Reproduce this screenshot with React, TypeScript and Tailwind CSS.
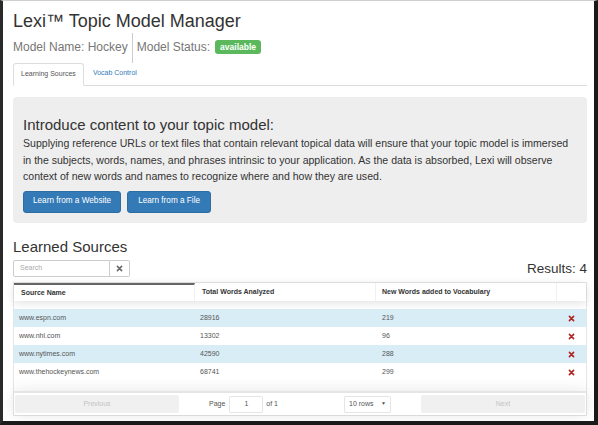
import React from "react";

const rows = [
  { name: "www.espn.com", total: "28916", added: "219" },
  { name: "www.nhl.com", total: "13302", added: "96" },
  { name: "www.nytimes.com", total: "42590", added: "288" },
  { name: "www.thehockeynews.com", total: "68741", added: "299" },
];

function RemoveIcon({ className }: { className?: string }) {
  return (
    <svg viewBox="0 0 10 10" className={className} aria-hidden>
      <path d="M2 2 L8 8 M8 2 L2 8" stroke="currentColor" strokeWidth="2.2" strokeLinecap="round" />
    </svg>
  );
}

export default function App() {
  return (
    <div className="h-[425px] w-[598px] overflow-hidden border-t border-l-[3px] border-r-[4px] border-b-[4px] border-t-[#cfcfcf] border-l-[#2a2a2a] border-r-[#1a1a1a] border-b-[#1a1a1a] bg-white pl-[10px] pr-[7px] font-['Liberation_Sans',Arial,sans-serif] text-[#333]">
      <h1 className="pt-[10px] text-[18px] leading-[20px]">Lexi™ Topic Model Manager</h1>

      <div className="mt-[2px] flex h-[30px] items-start text-[12px] text-[#777]">
        <span className="pt-[7px] leading-[14px]">Model Name: Hockey</span>
        <span className="ml-[4px] h-[30px] border-l border-[#ccc]" />
        <span className="flex items-center pt-[7px] pl-[4px] leading-[14px]">
          Model Status:
          <span className="ml-[5px] rounded-[3px] bg-[#5cb85c] px-[5px] text-[8.5px] font-bold leading-[14px] text-white">available</span>
        </span>
      </div>

      <div className="flex h-[23px] items-end border-b border-[#ddd] text-[7px]">
        <div className="-mb-px flex h-[23px] items-center rounded-t-[3px] border border-[#ddd] border-b-white bg-white px-[7px] text-[#555]">
          Learning Sources
        </div>
        <div className="flex h-[23px] items-center px-[9px] text-[#337ab7]">Vocab Control</div>
      </div>

      <div className="mt-[11px] h-[126px] rounded-[4px] bg-[#eee] px-[10px] pt-[19px]">
        <h3 className="text-[15px] leading-[18px]">Introduce content to your topic model:</h3>
        <p className="mt-[1px] pr-[8px] text-[10.55px] leading-[16.5px]">
          Supplying reference URLs or text files that contain relevant topical data will ensure that your topic model is immersed in the subjects, words, names, and phrases intrinsic to your application. As the data is absorbed, Lexi will observe context of new words and names to recognize where and how they are used.
        </p>
        <div className="mt-[6px] flex gap-[6px]">
          <button className="h-[22px] rounded-[3px] border border-[#2e6da4] bg-[#337ab7] px-[9px] text-[8.2px] text-white">Learn from a Website</button>
          <button className="h-[22px] rounded-[3px] border border-[#2e6da4] bg-[#337ab7] px-[10px] text-[8.2px] text-white">Learn from a File</button>
        </div>
      </div>

      <h2 className="mt-[15px] text-[15px] leading-[18px]">Learned Sources</h2>

      <div className="mt-[4px] flex items-end justify-between">
        <div className="flex h-[17px] text-[7px]">
          <div className="flex w-[97px] items-center rounded-l-[2px] border border-[#ccc] bg-white px-[6px] text-[#aaa]">Search</div>
          <div className="flex w-[20px] items-center justify-center rounded-r-[2px] border border-l-0 border-[#ccc] bg-white text-[#666]">
            <RemoveIcon className="h-[7px] w-[7px]" />
          </div>
        </div>
        <div className="text-[13.5px] leading-[16px]">Results: 4</div>
      </div>

      <div className="mt-[5px] flex h-[134px] flex-col border border-[rgba(0,0,0,0.1)] text-[7px]">
        <div className="relative z-10 grid h-[18px] grid-cols-[181px_181px_181px_1fr] font-bold shadow-[0_2px_10px_0_rgba(0,0,0,0.12)]">
          <div className="flex items-center border-t-2 border-r border-t-[rgba(0,0,0,0.6)] border-r-[rgba(0,0,0,0.06)] px-[7px]">Source Name</div>
          <div className="flex items-center border-r border-[rgba(0,0,0,0.06)] px-[7px]">Total Words Analyzed</div>
          <div className="flex items-center border-r border-[rgba(0,0,0,0.06)] px-[6px]">New Words added to Vocabulary</div>
          <div />
        </div>
        <div className="h-[8px]" />
        <div className="flex-1 text-[#555]">
          {rows.map((r, i) => (
            <div key={r.name} className={`grid h-[18px] grid-cols-[181px_181px_181px_1fr] items-center ${i % 2 === 0 ? "bg-[#d9edf7]" : "bg-white"}`}>
              <div className="px-[5px]">{r.name}</div>
              <div className="px-[5px]">{r.total}</div>
              <div className="px-[6px]">{r.added}</div>
              <div className="flex justify-center text-[#b0201c]">
                <RemoveIcon className="h-[7px] w-[7px]" />
              </div>
            </div>
          ))}
        </div>
        <div className="flex h-[24px] items-center gap-[6px] border-t-2 border-[rgba(0,0,0,0.1)] px-[1px] py-[3px] shadow-[0_0_15px_0_rgba(0,0,0,0.1)]">
          <div className="flex h-[18px] flex-1 items-center justify-center rounded-[2px] bg-[#f0f0f0] text-[#c4c4c4]">Previous</div>
          <div className="flex w-[230px] items-center justify-center text-[#555]">
            <span>Page</span>
            <span className="ml-[4px] flex h-[17px] w-[34px] items-center justify-center rounded-[2px] border border-[rgba(0,0,0,0.1)] bg-white">1</span>
            <span className="ml-[3px]">of 1</span>
            <span className="ml-[66px] flex h-[17px] w-[47px] items-center justify-between rounded-[2px] border border-[rgba(0,0,0,0.1)] bg-white px-[4px]">
              10 rows <span className="text-[5px]">▼</span>
            </span>
          </div>
          <div className="flex h-[18px] flex-1 items-center justify-center rounded-[2px] bg-[#f0f0f0] text-[#c4c4c4]">Next</div>
        </div>
      </div>
    </div>
  );
}
